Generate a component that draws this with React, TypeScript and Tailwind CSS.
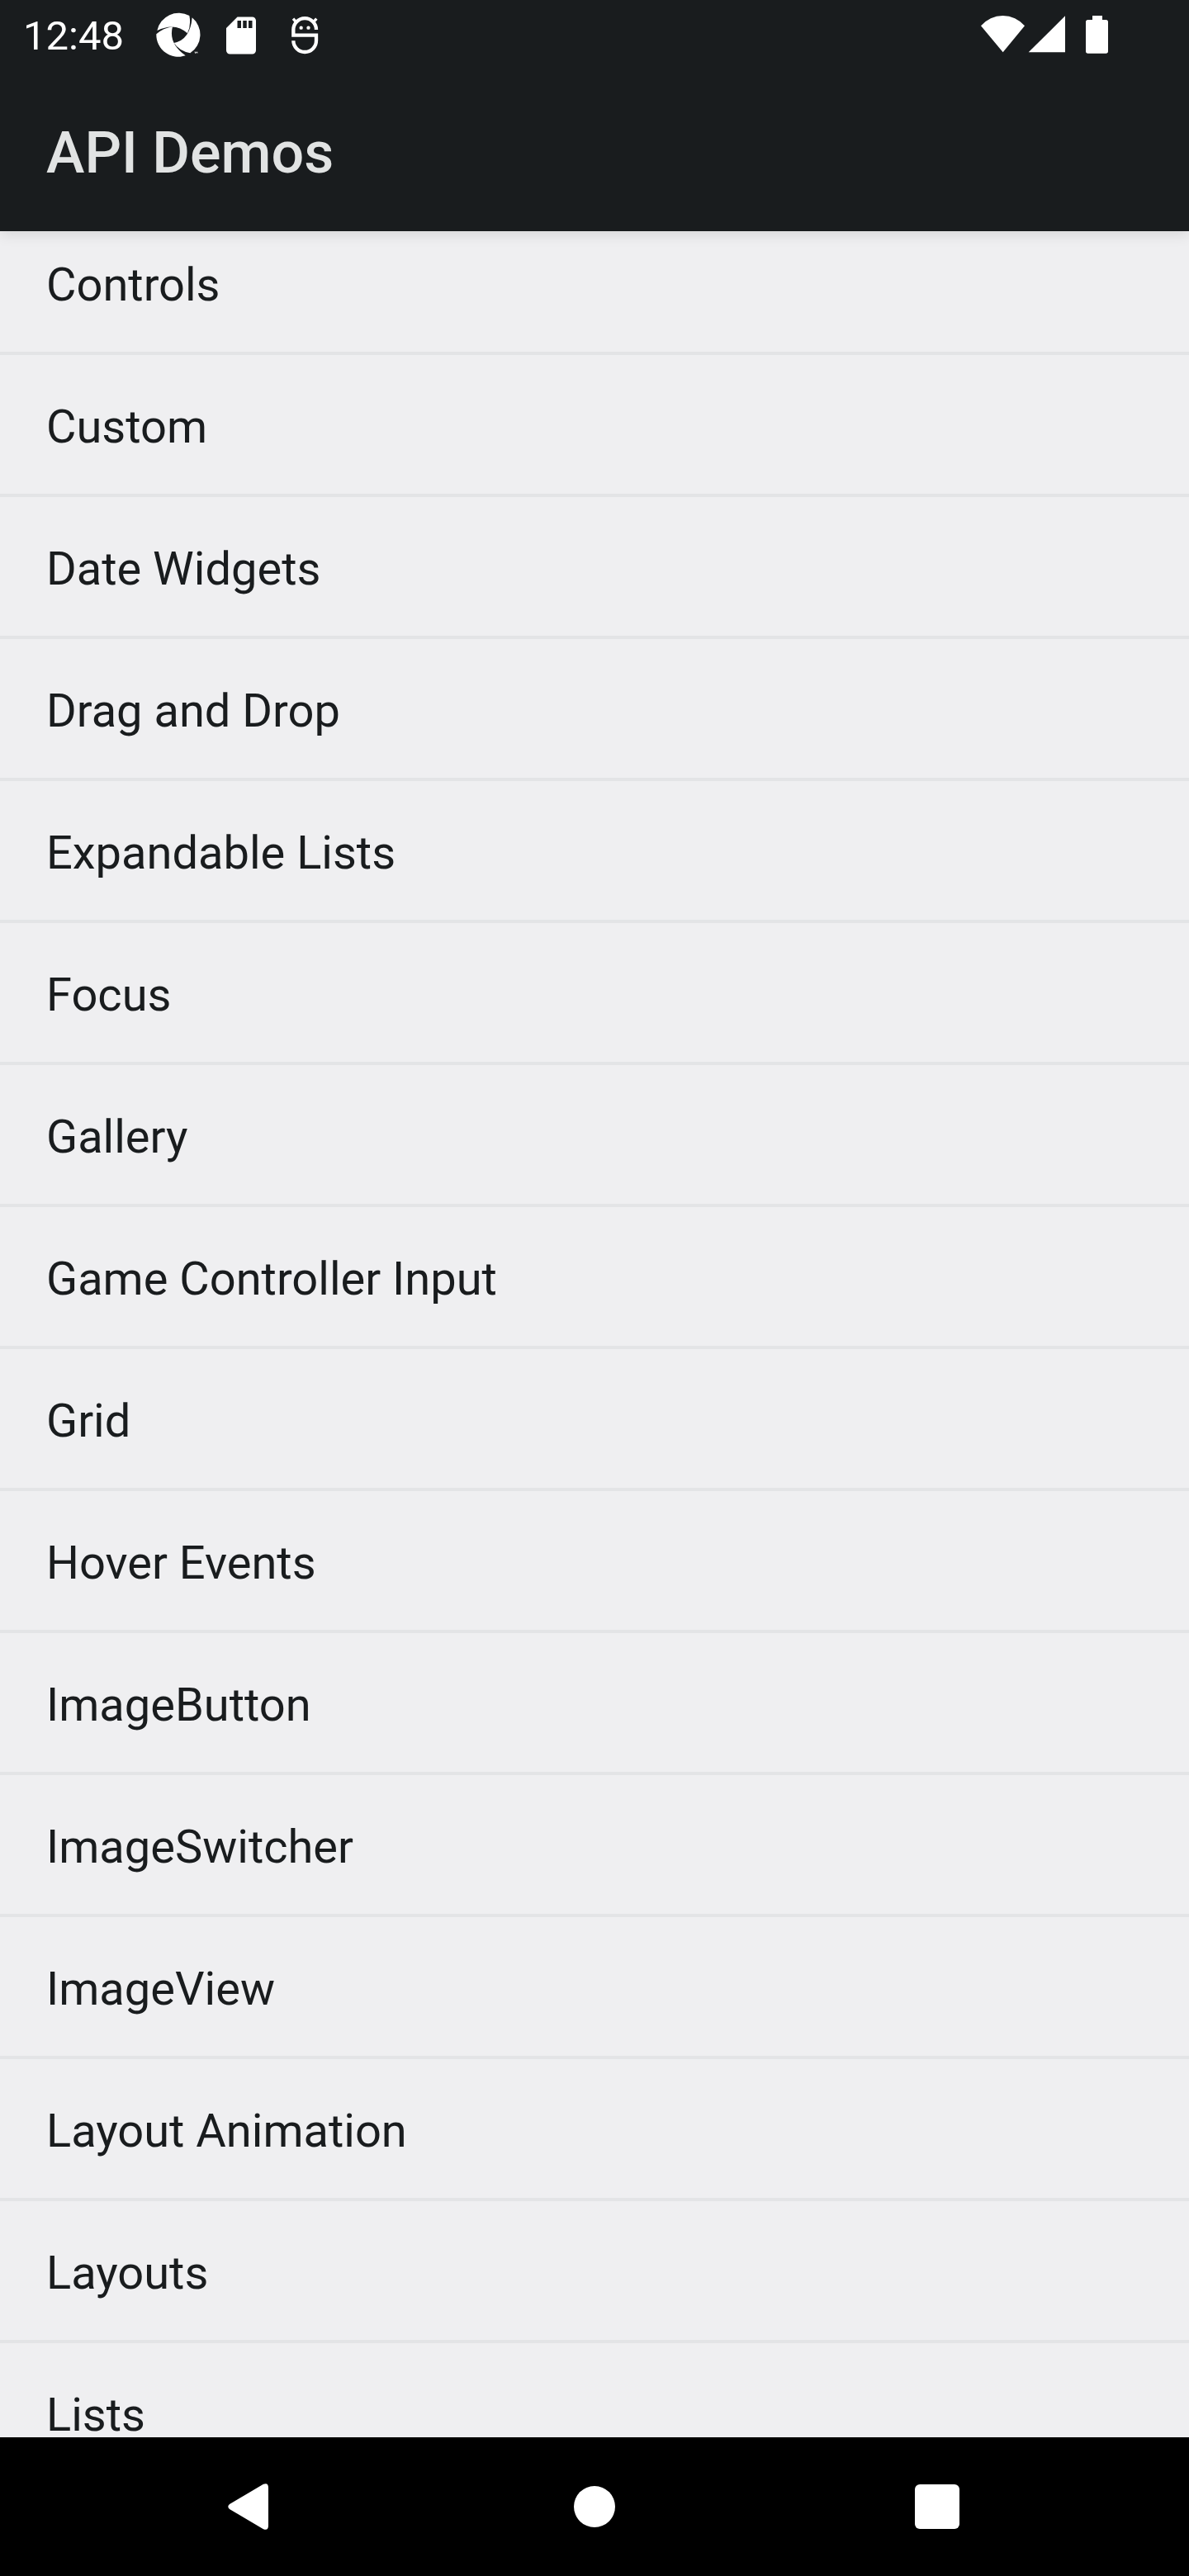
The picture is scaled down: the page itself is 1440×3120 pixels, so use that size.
const items = [
  'Controls',
  'Custom',
  'Date Widgets',
  'Drag and Drop',
  'Expandable Lists',
  'Focus',
  'Gallery',
  'Game Controller Input',
  'Grid',
  'Hover Events',
  'ImageButton',
  'ImageSwitcher',
  'ImageView',
  'Layout Animation',
  'Layouts',
  'Lists',
];

function ApertureIcon() {
  return (
    <svg className="h-[54px] w-[54px]" viewBox="566 46 162 162" fill="#fff">
      <path d="M570 112A80 80 0 0 1 687 58Q694 92 680 122Q636 80 570 112Z" />
      <path d="M697 65A80 80 0 0 1 690 194Q650 186 631 157Q690 146 697 65Z" />
      <path d="M567 125Q592 103 626 98Q610 158 673 203A80 80 0 0 1 567 125Z" />
      <path d="M705 189h5v2h-1v4h-2v-4h-2zM711 189h6v6h-1.500v-3h-3v3h-1.500z" />
    </svg>
  );
}

function SdCardIcon() {
  return (
    <svg className="h-[54px] w-[54px]" viewBox="0 0 24 24" fill="#fff">
      <path d="M18 2h-8L4 8v12c0 1.100.9 2 2 2h12c1.100 0 2-.9 2-2V4c0-1.100-.9-2-2-2zm-6 6h-2V4h2v4zm3 0h-2V4h2v4zm3 0h-2V4h2v4z" />
    </svg>
  );
}

function RobotIcon() {
  return (
    <svg className="h-[48px] w-[34px]" viewBox="277 27 102 144" fill="none" stroke="#fff" strokeWidth="13">
      <path d="M370 78A41.500 41.500 0 0 0 287 78V98H370V118A41.500 41 0 0 1 287 118" />
      <path d="M286 38L298 51M371 38L359 51" strokeWidth="10" />
      <circle cx="315" cy="71" r="6.500" fill="#fff" stroke="none" />
      <circle cx="341.500" cy="71" r="6.500" fill="#fff" stroke="none" />
    </svg>
  );
}

function StatusBar() {
  return (
    <div className="flex h-[84px] items-start text-white">
      <span className="ml-[28px] mt-[14px] w-[161px] whitespace-nowrap text-[49px] leading-[60px]">12:48</span>
      <div className="mt-[15px]">
        <ApertureIcon />
      </div>
      <div className="ml-[22px] mt-[15.500px]">
        <SdCardIcon />
      </div>
      <div className="ml-[33px] mt-[19px]">
        <RobotIcon />
      </div>
      <svg className="ml-[800px] mt-[18px] h-[48px] w-[156px]" viewBox="18 24 468 144" fill="#fff">
        <path d="M104 160L24 64A104 104 0 0 1 183 64Z" />
        <path d="M197 160L330 28V160Z" />
        <path d="M429 27H465V42H478Q486 42 486 50V156Q486 164 478 164H413Q405 164 405 156V50Q405 42 413 42H429Z" />
      </svg>
    </div>
  );
}

export default function App() {
  return (
    <div className="flex h-[3120px] w-[1440px] flex-col overflow-hidden bg-[#efeff1] font-['Roboto',sans-serif]">
      <header className="relative z-10 h-[280px] shrink-0 bg-[#191c1e] shadow-[0_4px_16px_rgba(0,0,0,0.1)]">
        <StatusBar />
        <h1 className="pl-[56px] pt-[60px] text-[70px] font-medium leading-[82px] text-[#e1e3e3]">API Demos</h1>
      </header>
      <main className="min-h-0 flex-1 overflow-hidden">
        <ul className="-mt-[22px]">
          {items.map((item) => (
            <li
              key={item}
              className="flex h-[172px] items-center border-b-4 border-[#e3e4e6] pl-[56px] pt-[5px] text-[56px] leading-[66px] text-[#191c1e]"
            >
              {item}
            </li>
          ))}
        </ul>
      </main>
      <nav className="flex h-[168px] shrink-0 items-center bg-black pl-[276px]">
        <svg className="h-[56px] w-[49px]" viewBox="0 0 49 56" fill="#fff">
          <path d="M43 .8Q49-1.500 49 5V51Q49 57.500 43 55.200L2 31Q-1.500 28 2 25Z" />
        </svg>
        <span className="ml-[370px] h-[50px] w-[50px] rounded-full bg-white" />
        <span className="ml-[363px] h-[54px] w-[54px] rounded-[6px] bg-white" />
      </nav>
    </div>
  );
}
